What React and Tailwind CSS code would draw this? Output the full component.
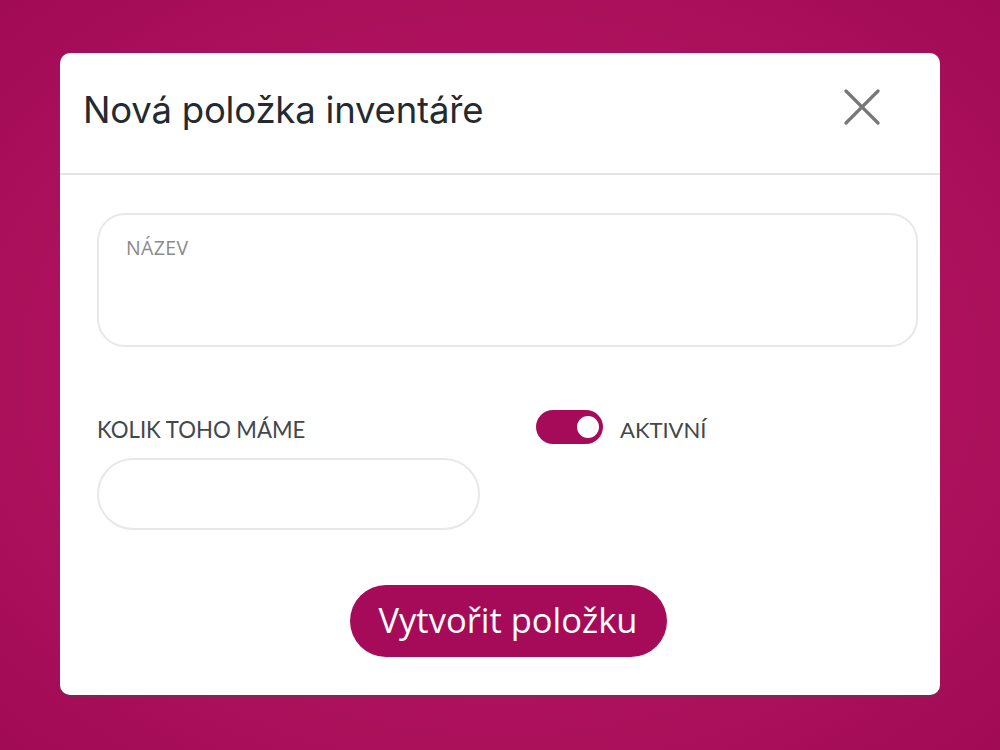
import React, { useState } from 'react';

const App = () => {
    const [active, setActive] = useState(true);

    return (
        <div className="w-[1000px] h-[750px] flex items-center justify-center bg-[radial-gradient(ellipse_at_center,#bf1f6f_0%,#b0135f_55%,#a10a55_100%)]">
            {/* Dialog */}
            <div className="w-[880px] h-[642px] mb-[2px] bg-white rounded-[10px] shadow-[0_2px_0_rgba(90,60,80,0.55)] flex flex-col">
                {/* Header */}
                <div className="h-[122px] flex items-center justify-between pl-[23px] pr-[60px] border-b-2 border-[#e4e4e4]">
                    <h1 className="text-[36.5px] text-[#252a31] font-[Inter,sans-serif] tracking-[-0.2px] mb-[6px]">Nová položka inventáře</h1>
                    <button className="w-[36px] h-[36px] mb-[12px]">
                        <svg viewBox="0 0 36 36" className="w-[36px] h-[36px]" stroke="#777" strokeWidth="3.2" strokeLinecap="round">
                            <line x1="2" y1="2" x2="34" y2="34" />
                            <line x1="34" y1="2" x2="2" y2="34" />
                        </svg>
                    </button>
                </div>

                {/* Body */}
                <div className="flex-1 flex flex-col pl-[37px] pr-[22px] pt-[38px]">
                    <div className="h-[134px] rounded-[28px] border-2 border-[#e8e8e8] px-[27px] pt-[18px]">
                        <div className="text-[19.5px] text-[#8a8a8a] font-['Open_Sans',sans-serif] tracking-[0.4px]">NÁZEV</div>
                    </div>

                    <div className="flex mt-[63px]">
                        <div className="w-[439px] flex flex-col">
                            <label className="text-[22.2px] text-[#43474d] font-[Lato,sans-serif] mt-[5px] leading-[30px]">KOLIK TOHO MÁME</label>
                            <div className="mt-[13px] w-[383px] h-[72px] rounded-full border-2 border-[#e8e8e8]" />
                        </div>
                        <div className="flex items-start gap-[17px]">
                            <button
                                onClick={() => setActive(!active)}
                                className="w-[67px] h-[34px] rounded-full bg-[#a50b59] flex items-center justify-end px-[4px]"
                            >
                                <span className="w-[22px] h-[22px] rounded-full bg-white" />
                            </button>
                            <span className="text-[22px] text-[#43474d] font-[Lato,sans-serif] leading-[30px] mt-[5px]">AKTIVNÍ</span>
                        </div>
                    </div>

                    <div className="flex justify-center mt-[55px] pl-[1px]">
                        <button className="w-[317px] h-[72px] rounded-full bg-[#a50b59] text-white text-[34.5px] font-['Open_Sans',sans-serif] pb-[3px]">
                            Vytvořit položku
                        </button>
                    </div>
                </div>
            </div>
        </div>
    );
};

export default App;
